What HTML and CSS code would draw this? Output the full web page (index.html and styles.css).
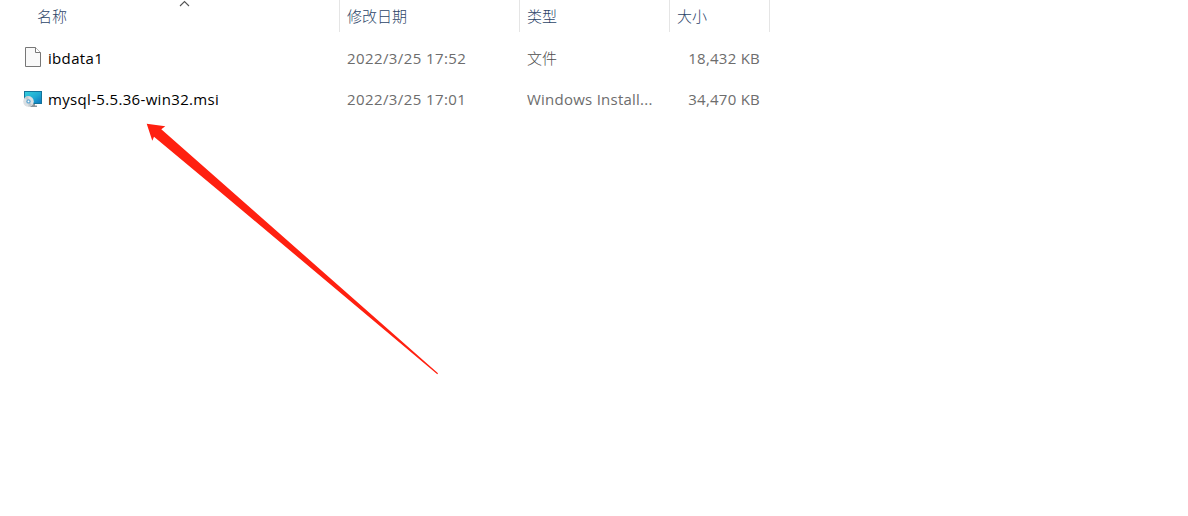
FILE: index.html
```html
<!DOCTYPE html>
<html lang="zh-CN">
<head>
    <meta charset="UTF-8">
    <meta name="viewport" content="width=device-width, initial-scale=1.0">
    <title>mysql</title>
    <link rel="stylesheet" href="styles.css">
</head>
<body>
    <div class="file-list">
        <div class="row header">
            <div class="cell name">名称
                <svg class="sort-icon" width="12" height="8" viewBox="0 0 12 8">
                    <path d="M2 6 L6.5 1.5 L11 6" fill="none" stroke="#555" stroke-width="1.1"/>
                </svg>
            </div>
            <div class="cell date">修改日期</div>
            <div class="cell type">类型</div>
            <div class="cell size">大小</div>
        </div>

        <div class="row file">
            <div class="cell name">
                <svg class="icon" width="20" height="22" viewBox="0 0 20 22">
                    <path d="M2.5 1.5 H12.5 L17.5 6.5 V20.5 H2.5 Z" fill="#f9f9f9" stroke="#777" stroke-width="1"/>
                    <path d="M12.5 1.5 V6.5 H17.5" fill="#fff" stroke="#777" stroke-width="1"/>
                </svg>
                <span class="text">ibdata1</span>
            </div>
            <div class="cell date"><span class="text">2022/3/25 17:52</span></div>
            <div class="cell type kind">文件</div>
            <div class="cell size"><span class="text">18,432 KB</span></div>
        </div>

        <div class="row file">
            <div class="cell name">
                <svg class="icon" width="20" height="22" viewBox="0 0 20 22">
                    <defs>
                        <linearGradient id="screen" x1="0" y1="0" x2="1" y2="1">
                            <stop offset="0" stop-color="#35d0dc"/>
                            <stop offset="0.55" stop-color="#1fa9d3"/>
                            <stop offset="1" stop-color="#0b72bd"/>
                        </linearGradient>
                    </defs>
                    <path d="M8 17 H12 V18.5 H14 V20 H7 Z" fill="#8b969d"/>
                    <rect x="1.5" y="4.5" width="17" height="12" fill="url(#screen)" stroke="#14739a" stroke-width="1"/>
                    <circle cx="5.5" cy="14.4" r="5.3" fill="#dce0e3"/>
                    <path d="M5.5 14.4 L1.7 10.7 A5.3 5.3 0 0 1 5.5 9.1 Z M5.5 14.4 L9.3 18.1 A5.3 5.3 0 0 1 5.5 19.7 Z" fill="#c3cace"/>
                    <circle cx="5.5" cy="14.4" r="2.2" fill="#65a9d2"/>
                    <circle cx="5.5" cy="14.4" r="0.9" fill="#fff"/>
                </svg>
                <span class="text">mysql-5.5.36-win32.msi</span>
            </div>
            <div class="cell date"><span class="text">2022/3/25 17:01</span></div>
            <div class="cell type"><span class="text">Windows Install...</span></div>
            <div class="cell size"><span class="text">34,470 KB</span></div>
        </div>
    </div>

    <!-- Arrow pointing at the installer -->
    <svg class="arrow" width="292" height="252" viewBox="146 123 292 252">
        <path d="M146.7 123.7 L165.3 126.3 L161.3 129.3 L220 181 L438 373.3 L437.3 374.2 L220 191.7 L154 136.7 L152.3 140.8 Z" fill="#ff2010"/>
    </svg>
</body>
</html>
```
FILE: styles.css
```css
body {
    margin: 0;
    height: 516px;
    overflow: hidden;
    background-color: white;
    color: #6d6d6d;
    font-family: "Open Sans", "Noto Sans CJK SC", sans-serif;
    font-size: 15px;
    font-weight: 300;
}

.file-list {
    width: 770px;
}

.row {
    display: grid;
    grid-template-columns: 340px 180px 150px 100px;
}

.cell {
    box-sizing: border-box;
    padding-left: 7px;
    white-space: nowrap;
}

.header {
    height: 32px;
    margin-bottom: 6px;
    line-height: 32px;
    color: #2c4468;
}

.header .cell {
    border-right: 1px solid #e5e5e5;
}

.header .name {
    position: relative;
    padding-left: 37px;
}

.sort-icon {
    position: absolute;
    left: 178px;
    top: 0;
}

.file {
    height: 41px;
    line-height: 41px;
}

.text {
    font-weight: 400;
    letter-spacing: 0.24px;
}

.kind {
    color: #4c4c4c;
}

.file .name {
    display: flex;
    align-items: center;
    padding-left: 23px;
    color: black;
}

.name .text {
    letter-spacing: 0.33px;
}

.date .text {
    letter-spacing: 0.4px;
}

.icon {
    margin-right: 5px;
    margin-bottom: 3px;
}

.file .size {
    padding-right: 10px;
    text-align: right;
}

.arrow {
    position: absolute;
    left: 146px;
    top: 123px;
}
```
